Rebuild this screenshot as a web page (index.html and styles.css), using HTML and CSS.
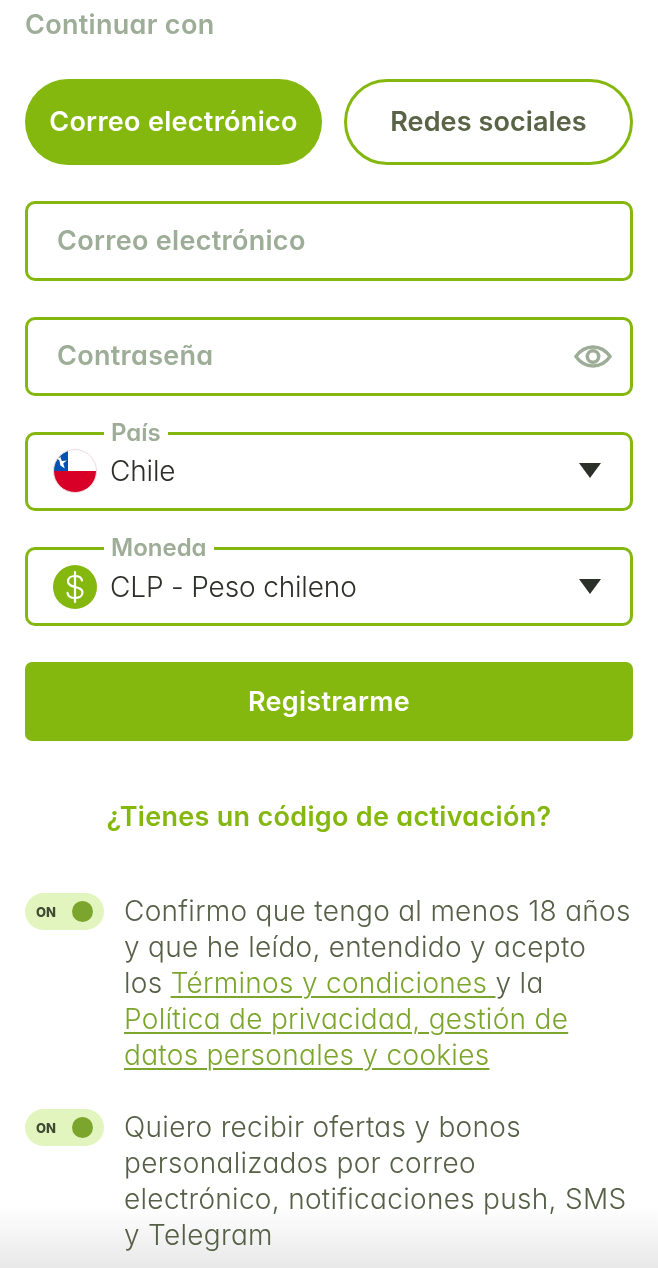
FILE: index.html
```html
<!DOCTYPE html>
<html lang="es">
<head>
<meta charset="utf-8">
<title>Registro</title>
<link rel="stylesheet" href="styles.css">
</head>
<body>
<div class="fade"></div>
<main class="page">
  <h2 class="title">Continuar con</h2>
  <div class="tabs">
    <button class="tab tab-active">Correo electrónico</button>
    <button class="tab tab-idle">Redes sociales</button>
  </div>
  <div class="field"><span class="placeholder">Correo electrónico</span></div>
  <div class="field field-spread">
    <span class="placeholder">Contraseña</span>
    <svg class="eye" width="38" height="25" viewBox="0 0 40 26"><path d="M2 13C7 6 13 3 20 3s13 3 18 10c-5 7-11 10-18 10S7 20 2 13Z" fill="none" stroke="#9dad97" stroke-width="3.6" stroke-linejoin="round"/><circle cx="20" cy="13" r="6" fill="none" stroke="#9dad97" stroke-width="3.8"/></svg>
  </div>
  <div class="field field-select field-country">
    <span class="legend">País</span>
    <svg class="badge" width="44" height="44" viewBox="0 0 44 44"><defs><clipPath id="c"><circle cx="22" cy="22" r="21.5"/></clipPath></defs><g clip-path="url(#c)"><rect width="44" height="22" fill="#fff"/><rect y="22" width="44" height="22" fill="#d80027"/><rect width="15" height="22" fill="#0052b4"/><path d="M7 7l1.8 5 5-.5-3.6 3 1.6 5-4.4-3-1-5-3-2.500 3.600-.4z" fill="#fff"/></g><circle cx="22" cy="22" r="21.500" fill="none" stroke="#f0d8dc" stroke-width="1"/></svg>
    <span class="value">Chile</span>
    <svg class="caret" width="22" height="15" viewBox="0 0 22 15"><path d="M0 0h22L11 15Z" fill="#2d2f29"/></svg>
  </div>
  <div class="field field-select">
    <span class="legend">Moneda</span>
    <svg class="badge" width="44" height="44" viewBox="0 0 44 44"><circle cx="22" cy="22" r="22" fill="#84b80f"/><path d="M29 15.500c-.6-3-3.500-4.500-7-4.500-4 0-7 2-7 5.500 0 7.500 14.500 3.500 14.500 11 0 3.500-3.300 5.500-7.500 5.500-4 0-7-1.800-7.500-5.200M22 7v30" fill="none" stroke="#fff" stroke-width="2.200" stroke-linecap="round"/></svg>
    <span class="value">CLP - Peso chileno</span>
    <svg class="caret" width="22" height="15" viewBox="0 0 22 15"><path d="M0 0h22L11 15Z" fill="#2d2f29"/></svg>
  </div>
  <button class="submit">Registrarme</button>
  <a class="code-link">¿Tienes un código de activación?</a>
  <div class="consent">
    <div class="toggle"><span class="toggle-label">ON</span><span class="knob"></span></div>
    <p class="consent-text">Confirmo que tengo al menos 18 años y que he leído, entendido y acepto<br>los <a class="legal">Términos y condiciones </a>y la<br><a class="legal">Política de privacidad, gestión de<br>datos personales y cookies</a></p>
  </div>
  <div class="consent">
    <div class="toggle"><span class="toggle-label">ON</span><span class="knob"></span></div>
    <p class="consent-text">Quiero recibir ofertas y bonos personalizados por correo electrónico, notificaciones push, SMS y Telegram</p>
  </div>
</main>
</body>
</html>
```
FILE: styles.css
```css
* { box-sizing: border-box; }
html, body { margin: 0; height: 100%; overflow: hidden; background: #fff; }
body { font-family: "Inter", "Liberation Sans", sans-serif; font-feature-settings: "cv11"; }
button { font-feature-settings: "cv11"; }
.page { position: relative; padding: 7px 25px 0; display: flex; flex-direction: column; }
.title { margin: 0; font-size: 27px; line-height: 36px; font-weight: 600; letter-spacing: .3px; color: #9dad97; }
.tabs { display: flex; gap: 22px; margin-top: 36px; }
.tab { height: 86px; border-radius: 43px; font: 600 27px "Inter", sans-serif; letter-spacing: .3px; padding: 0 0 2px; }
.tab-active { width: 297px; background: #84b80f; border: 0; color: #fff; }
.tab-idle { flex: 1; background: #fff; border: 3px solid #84b80f; color: #596346; letter-spacing: .1px; }
.field { position: relative; height: 79px; margin-top: 36px; border: 3px solid #84b80f; border-radius: 10px; display: flex; align-items: center; padding: 0 18px 0 29px; }
.tabs + .field { margin-top: 36px; height: 80px; }
.field-spread { justify-content: space-between; }
.placeholder { font-size: 27px; font-weight: 600; letter-spacing: .3px; color: #9dad97; position: relative; top: -1px; }
.eye { flex: none; }
.field-select { padding: 0 29px 0 25px; }
.field-country { padding-bottom: 2px; }
.legend { position: absolute; left: 76px; top: -16px; padding: 0 7px; background: #fff; font-size: 24px; line-height: 28px; font-weight: 600; color: #9dad97; }
.badge { flex: none; margin-right: 14px; }
.value { flex: 1; margin-left: -1px; font-size: 28px; font-weight: 300; letter-spacing: -.15px; color: #2d2f29; }
.caret { flex: none; }
.submit { height: 79px; margin-top: 36px; border: 0; border-radius: 7px; background: #84b80f; color: #fff; font: 600 27px "Inter", sans-serif; letter-spacing: .3px; padding: 0; }
.code-link { margin-top: 58px; text-align: center; font-size: 27px; line-height: 36px; font-weight: 600; letter-spacing: .3px; color: #84b80f; }
.consent { display: flex; gap: 20px; align-items: flex-start; }
.code-link + .consent { margin-top: 58px; }
.consent + .consent { margin-top: 36px; }
.toggle { flex: none; width: 79px; height: 37px; border-radius: 19px; background: #e2f5bf; display: flex; align-items: center; justify-content: space-between; padding: 0 11px; }
.toggle-label { font-size: 13px; font-weight: 800; color: #3f4a33; }
.knob { width: 21px; height: 21px; border-radius: 50%; background: #7ba52c; }
.consent-text { margin: 0; flex: 1; font-size: 28px; line-height: 36px; font-weight: 300; letter-spacing: .3px; color: #566047; }
.legal { color: #7ba52c; text-decoration: underline; text-decoration-thickness: 2px; text-underline-offset: 3px; }
.fade { position: fixed; left: 0; right: 0; bottom: 0; height: 62px; background: linear-gradient(to bottom, #fff, #e8e8e8); }
```
